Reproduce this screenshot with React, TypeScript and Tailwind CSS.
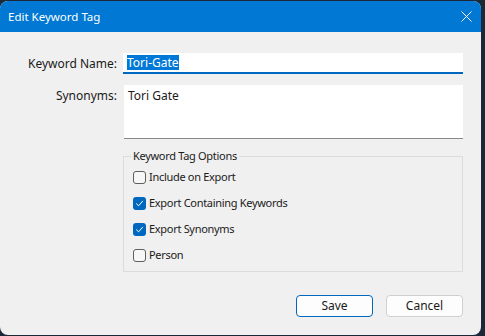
const font = { fontFamily: '"Noto Sans", "Segoe UI", sans-serif' };

const options = [
  { label: 'Include on Export', checked: false },
  { label: 'Export Containing Keywords', checked: true },
  { label: 'Export Synonyms', checked: true },
  { label: 'Person', checked: false },
];

function CheckBox({ checked }: { checked: boolean }) {
  if (checked) {
    return (
      <span className="flex h-[13px] w-[13px] items-center justify-center rounded-[3px] bg-[#0067c0]">
        <svg width="9" height="9" viewBox="0 0 9 9" fill="none">
          <path d="M1.5 4.8 L3.6 6.8 L7.6 2.2" stroke="white" strokeWidth="1" strokeLinecap="round" strokeLinejoin="round" />
        </svg>
      </span>
    );
  }
  return <span className="h-[13px] w-[13px] rounded-[3px] border border-[#5f5f5f] bg-[#f7f7f7]" />;
}

export default function App() {
  return (
    <div className="h-[336px] w-[485px] overflow-hidden bg-[#1b2838] pt-px" style={font}>
      <div className="flex h-[334px] w-[481px] flex-col overflow-hidden rounded-[8px] bg-[#f0f0f0]">
        <div className="flex h-[31px] shrink-0 items-center justify-between bg-[#0078d4] pl-[8px] pr-[9px] text-[11.5px] text-white">
          <span>Edit Keyword Tag</span>
          <svg width="11" height="11" viewBox="0 0 11 11" fill="none">
            <path d="M0.5 0.5 L10.5 10.5 M10.5 0.5 L0.5 10.5" stroke="white" strokeWidth="1" />
          </svg>
        </div>

        <div className="flex flex-col pt-[21px] text-[12px] text-[#1a1a1a]">
          <div className="flex items-center">
            <label className="w-[117px] text-right">Keyword Name:</label>
            <div className="ml-[6px] flex h-[21px] w-[340px] items-center border-b-2 border-[#0067c0] bg-white pl-[4px]">
              <span className="bg-[#0078d7] leading-[15px] text-white">Tori-Gate</span>
            </div>
          </div>

          <div className="mt-[11px] flex items-start">
            <label className="w-[117px] pt-[2px] text-right">Synonyms:</label>
            <div className="ml-[7px] h-[54px] w-[339px] border-b border-[#8a8a8a] bg-white pl-[4px] pt-[2px]">
              Tori Gate
            </div>
          </div>

          <fieldset className="ml-[123px] mt-[10px] h-[123px] w-[340px] border border-[#dcdcdc] pl-[9px] text-[11px] tracking-[-0.3px]">
            <legend className="ml-[-2px] px-[2px] leading-[14px]">Keyword Tag Options</legend>
            <div className="flex flex-col pt-[1px]">
              {options.map((option) => (
                <div key={option.label} className="flex h-[26px] items-center gap-[2px]">
                  <CheckBox checked={option.checked} />
                  <span className="ml-[1px]">{option.label}</span>
                </div>
              ))}
            </div>
          </fieldset>

          <div className="mt-[23px] flex justify-end gap-[13px] pr-[18px]">
            <button className="h-[22px] w-[77px] rounded-[4px] border border-[#0067c0] bg-[#fdfdfd] text-[12px]">
              Save
            </button>
            <button className="h-[22px] w-[77px] rounded-[4px] border border-[#d0d0d0] bg-[#fdfdfd] text-[12px]">
              Cancel
            </button>
          </div>
        </div>
      </div>
    </div>
  );
}
